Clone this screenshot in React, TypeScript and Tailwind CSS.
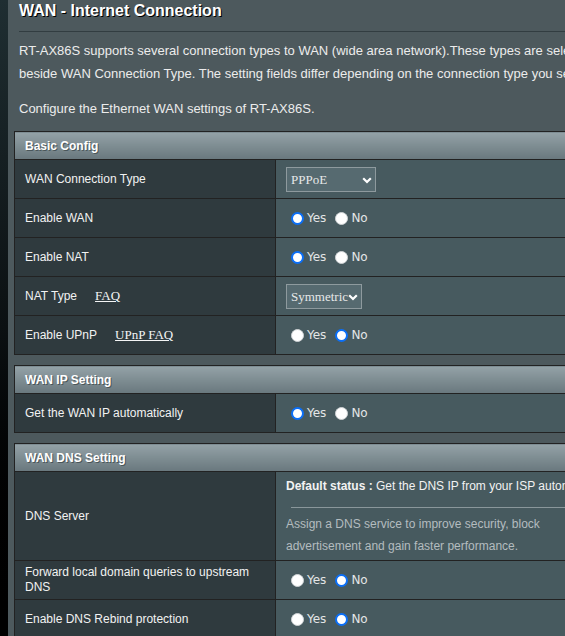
import React from 'react';

const Radio = ({ checked }: { checked?: boolean }) => (
  <span
    className={`ml-[5px] mr-[3px] inline-block h-[13px] w-[13px] shrink-0 rounded-full ${
      checked ? 'border-2 border-[#0b6ff7] bg-white' : 'border border-[#d0d4d6] bg-white'
    }`}
  />
);

const YesNo = ({ yes }: { yes: boolean }) => (
  <div className="flex items-center font-['DejaVu_Sans',sans-serif] text-[12px] text-[#e4e6e7]">
    <Radio checked={yes} />
    <span>Yes</span>
    <span className="w-[4px]" />
    <Radio checked={!yes} />
    <span>No</span>
  </div>
);

const Select = ({ value, width }: { value: string; width: string }) => (
  <div
    className={`${width} relative flex h-[25px] items-center border border-[#8e9a9e] bg-[#566a70] pl-[4px] font-['Liberation_Serif',serif] text-[13px] text-[#e6e8e9]`}
  >
    <span className="leading-none">{value}</span>
    <svg className="absolute right-[3px] top-[9px]" width="10" height="7" viewBox="0 0 10 7">
      <path d="M1.2 1.2 5 5 8.8 1.2" fill="none" stroke="#fff" strokeWidth="2.2" />
    </svg>
  </div>
);

const Link = ({ children }: { children: React.ReactNode }) => (
  <span className="ml-[18px] font-['Liberation_Serif',serif] text-[13px] text-[#f4f5f5] underline">
    {children}
  </span>
);

const Header = ({ title }: { title: string }) => (
  <tr>
    <td
      colSpan={2}
      className="h-[28px] border border-[#222] bg-gradient-to-b from-[#94a2a7] to-[#69787e] px-[10px] text-[12px] font-bold text-white [text-shadow:1px_1px_0_#4a565a]"
    >
      {title}
    </td>
  </tr>
);

const Row = ({ label, children, h = 'h-[39px]' }: { label: React.ReactNode; children: React.ReactNode; h?: string }) => (
  <tr>
    <th
      className={`${h} w-[261px] border border-[#222] bg-[#2f3a3e] px-[10px] text-left align-middle text-[12px] font-normal leading-[15px] text-[#f2f2f2]`}
    >
      {label}
    </th>
    <td className={`${h} border border-[#222] bg-[#475a5f] px-[10px] align-middle text-[12px]`}>{children}</td>
  </tr>
);

export default function App() {
  return (
    <div className="flex min-h-screen w-max bg-black font-['Liberation_Sans',Arial,sans-serif]">
      <div className="w-[8px] shrink-0 bg-gradient-to-b from-[#1f2e32] via-[#0b1012] to-black" />
      <div className="w-[760px] shrink-0 bg-[#4d595d] pb-4 pl-[6px]">
        <div className="pl-[5px]">
          <h1 className="pt-[1px] text-[16px] font-bold leading-[20px] text-white [text-shadow:1px_1px_0_#000]">
            WAN - Internet Connection
          </h1>
          <div className="mt-[10px] h-px bg-[#323d41]" />
          <p className="mt-[7px] text-[13px] leading-[23px] text-[#ececec]">
            RT-AX86S supports several connection types to WAN (wide area network).These types are selected from the dropdown menu
            beside WAN Connection Type. The setting fields differ depending on the connection type you selected.
          </p>
          <p className="mt-[12px] text-[13px] leading-[23px] text-[#ececec]">Configure the Ethernet WAN settings of RT-AX86S.</p>
        </div>

        <table className="mt-[11px] w-[750px] border-collapse">
          <tbody>
            <Header title="Basic Config" />
            <Row label="WAN Connection Type">
              <Select value="PPPoE" width="w-[90px]" />
            </Row>
            <Row label="Enable WAN">
              <YesNo yes />
            </Row>
            <Row label="Enable NAT">
              <YesNo yes />
            </Row>
            <Row
              label={
                <>
                  NAT Type<Link>FAQ</Link>
                </>
              }
            >
              <Select value="Symmetric" width="w-[76px]" />
            </Row>
            <Row
              label={
                <>
                  Enable UPnP<Link>UPnP FAQ</Link>
                </>
              }
            >
              <YesNo yes={false} />
            </Row>
          </tbody>
        </table>

        <table className="mt-[10px] w-[750px] border-collapse">
          <tbody>
            <Header title="WAN IP Setting" />
            <Row label="Get the WAN IP automatically">
              <YesNo yes />
            </Row>
          </tbody>
        </table>

        <table className="mt-[10px] w-[750px] border-collapse">
          <tbody>
            <Header title="WAN DNS Setting" />
            <Row label="DNS Server" h="h-[89px]">
              <div className="leading-[20px] text-[#f2f2f2]">
                <b>Default status :</b> Get the DNS IP from your ISP automatically.
              </div>
              <div className="ml-[5px] mt-[11px] h-px bg-[#8a979b]" />
              <p className="mt-[5px] w-[300px] leading-[22px] text-[#b4bcbf]">
                Assign a DNS service to improve security, block advertisement and gain faster performance.
              </p>
            </Row>
            <Row label="Forward local domain queries to upstream DNS">
              <YesNo yes={false} />
            </Row>
            <Row label="Enable DNS Rebind protection">
              <YesNo yes={false} />
            </Row>
          </tbody>
        </table>
      </div>
    </div>
  );
}
